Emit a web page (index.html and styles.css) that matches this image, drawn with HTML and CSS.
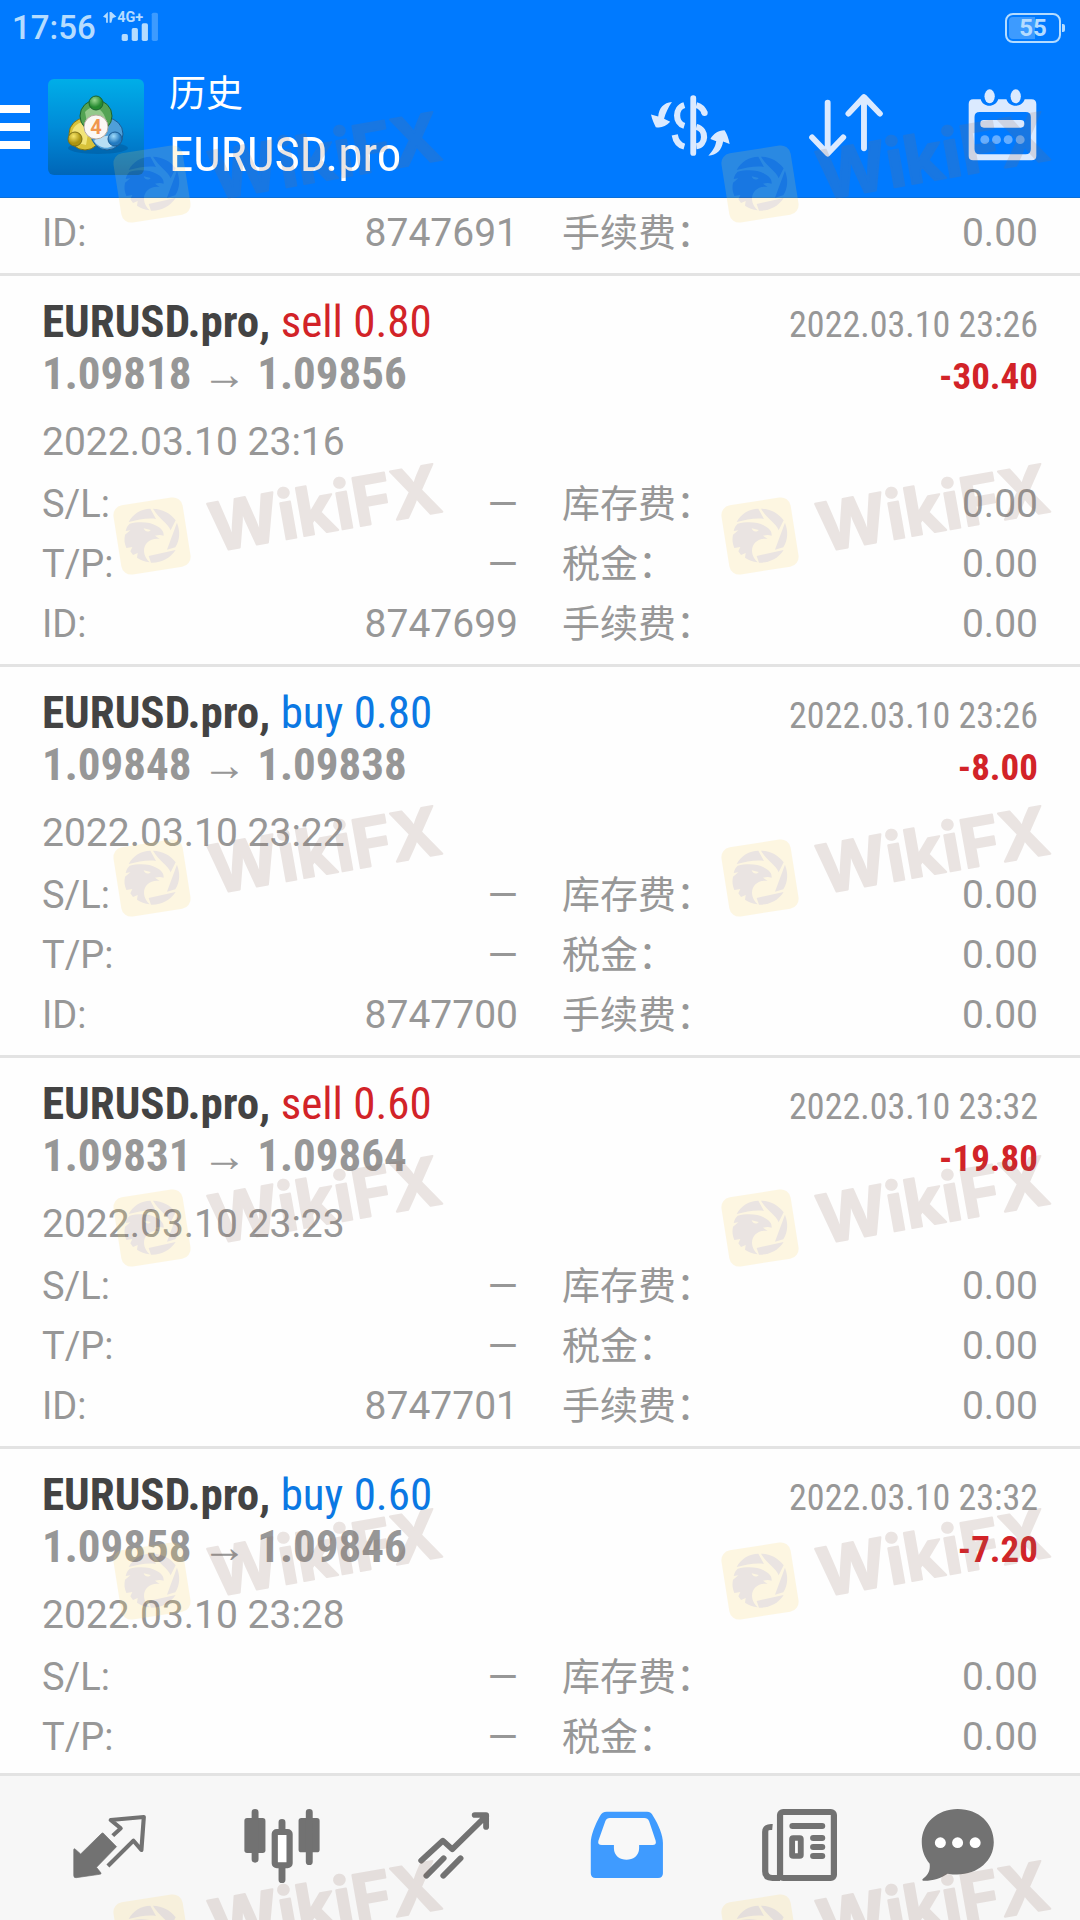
FILE: index.html
```html
<!DOCTYPE html>
<html lang="zh-CN">
<head>
<meta charset="utf-8">
<meta name="viewport" content="width=device-width, initial-scale=1">
<title>历史 EURUSD.pro</title>
<link rel="stylesheet" href="styles.css">
</head>
<body>
<div class="app">
  <header class="header">
    <div class="status">
      <span class="clock">17:56</span>
      <svg class="signal" viewBox="300 30 162 96" preserveAspectRatio="none" aria-hidden="true">
        <g fill="#b5dcff">
          <path d="M300 50l14-14v32h-5V54z"/><path d="M319 36h5l15 14-11 4-4 14h-5z"/>
          <rect x="354" y="102" width="18" height="21" rx="5"/>
          <rect x="383" y="84" width="18" height="39" rx="5"/>
          <rect x="412" y="70" width="18" height="53" rx="5"/>
          <text class="network" x="341" y="67">4G+</text>
        </g>
        <rect x="441" y="38" width="18" height="85" rx="5" fill="#3d9bff"/>
      </svg>
      <span class="battery"><span class="level">55</span></span>
    </div>
    <div class="appbar">
      <button class="menu" aria-label="菜单"><span></span><span></span><span></span></button>
      <svg class="logo" viewBox="0 0 96 96" aria-hidden="true">
        <defs>
          <linearGradient id="tile" x1="0" y1="0" x2="0" y2="1"><stop offset="0" stop-color="#00aee8"/><stop offset=".5" stop-color="#008bd8"/><stop offset="1" stop-color="#0066b8"/></linearGradient>
          <radialGradient id="green" cx=".4" cy=".3"><stop offset="0" stop-color="#9ad890"/><stop offset="1" stop-color="#258a30"/></radialGradient>
          <radialGradient id="gold" cx=".4" cy=".3"><stop offset="0" stop-color="#f8e66a"/><stop offset="1" stop-color="#ac9410"/></radialGradient>
          <radialGradient id="sky" cx=".4" cy=".3"><stop offset="0" stop-color="#a0dbfa"/><stop offset="1" stop-color="#237ac0"/></radialGradient>
        </defs>
        <rect width="96" height="96" rx="6" fill="url(#tile)"/>
        <ellipse cx="50" cy="69" rx="30" ry="6" fill="#00508f" opacity=".4"/>
        <g stroke-width="1">
          <circle cx="37" cy="55" r="16" fill="#d8c23a" stroke="#7e7014"/><path d="M24 53c2-8 10-12 18-9l-4 22-8-2z" fill="#f2e478"/>
          <circle cx="59" cy="55" r="16" fill="#4f9fd8" stroke="#1b5c94"/><path d="M46 62c6 9 18 9 24 0l-4-6-16 2z" fill="#b8def4"/>
          <circle cx="48" cy="37" r="16" fill="#54a353" stroke="#1c642e"/><path d="M37 33c8-10 20-4 22 13l-10 2-10-4z" fill="#94c98b"/>
          <circle cx="48" cy="24" r="7" fill="url(#green)" stroke="#1c642e"/>
          <circle cx="27" cy="60" r="7" fill="url(#gold)" stroke="#7e7014"/>
          <circle cx="67" cy="60" r="7" fill="url(#sky)" stroke="#1b5c94"/>
          <circle cx="48" cy="48" r="12" fill="#fbf8f5" stroke="#b6aaa0"/>
        </g>
        <text class="four" x="48" y="55" text-anchor="middle">4</text>
      </svg>
      <h1 class="title"><span class="section">历史</span><span class="symbol">EURUSD.pro</span></h1>
      <div class="actions">
        <button aria-label="货币">
          <svg class="ico-money" viewBox="321 281 230 182" preserveAspectRatio="none">
            <path d="M382 302c-24 2-38 18-40 43l-21-6c3 16 10 29 14 38 14 3 29-1 42-16l-18-9c5-18 12-34 23-50zM488 462c14-16 20-26 23-43l-17-7c9-16 21-25 41-26 6 9 12 24 15 41l-19-7c-4 26-19 41-43 42z" fill="#dbeaff"/>
            <path d="M418 311c-28 8-28 54 0 62M453 311q18 5 24 24M390 400q5 29 28 35M453 376c32 8 28 55 0 58" fill="none" stroke="#dbeaff" stroke-width="18"/>
            <path d="M444 290v164" stroke="#dbeaff" stroke-width="17" stroke-linecap="round"/>
            <circle cx="477" cy="335" r="9" fill="#dbeaff"/>
          </svg>
        </button>
        <button aria-label="排序">
          <svg class="ico-sort" viewBox="782 279 214 192" preserveAspectRatio="none">
            <path d="M836 308v152M791 412l45 49 45-49M941 445V292M896 341l45-50 46 50" fill="none" stroke="#dbeaff" stroke-width="17" stroke-linecap="round" stroke-linejoin="round"/>
          </svg>
        </button>
        <button aria-label="日期">
          <svg class="ico-cal" viewBox="1241 267 201 216" preserveAspectRatio="none">
            <path fill-rule="evenodd" fill="#dbeaff" d="M1256 298h22c6 26 44 26 51 0h24c7 26 46 26 53 0h20q14 0 14 14v156q0 13-14 13h-170q-13 0-13-13V312q0-14 13-14zM1275 336q-15 0-15 15v96q0 16 15 16h134q15 0 15-16v-96q0-15-15-15z"/>
            <ellipse cx="1304" cy="289" rx="15" ry="21" fill="#dbeaff"/><ellipse cx="1380" cy="289" rx="15" ry="21" fill="#dbeaff"/>
            <rect x="1277" y="360" width="128" height="23" rx="10" fill="#dbeaff"/>
            <g fill="#66aeff"><circle cx="1290" cy="419" r="13"/><circle cx="1324" cy="419" r="13"/><circle cx="1358" cy="419" r="13"/><circle cx="1393" cy="419" r="13"/></g>
          </svg>
        </button>
      </div>
    </div>
  </header>

  <main class="list">
    <article class="deal deal-partial">
      <dl class="facts">
        <div><dt>ID:</dt><dd>8747691</dd></div><div><dt>手续费：</dt><dd>0.00</dd></div>
      </dl>
    </article>

    <article class="deal">
      <div class="line"><h2 class="name">EURUSD.pro, <span class="sell">sell 0.80</span></h2><time class="closed">2022.03.10 23:26</time></div>
      <div class="line line-price"><p class="prices">1.09818 <span class="arrow">→</span> 1.09856</p><p class="profit">-30.40</p></div>
      <time class="opened">2022.03.10 23:16</time>
      <dl class="facts">
        <div><dt>S/L:</dt><dd>—</dd></div><div><dt>库存费：</dt><dd>0.00</dd></div>
        <div><dt>T/P:</dt><dd>—</dd></div><div><dt>税金：</dt><dd>0.00</dd></div>
        <div><dt>ID:</dt><dd>8747699</dd></div><div><dt>手续费：</dt><dd>0.00</dd></div>
      </dl>
    </article>

    <article class="deal">
      <div class="line"><h2 class="name">EURUSD.pro, <span class="buy">buy 0.80</span></h2><time class="closed">2022.03.10 23:26</time></div>
      <div class="line line-price"><p class="prices">1.09848 <span class="arrow">→</span> 1.09838</p><p class="profit">-8.00</p></div>
      <time class="opened">2022.03.10 23:22</time>
      <dl class="facts">
        <div><dt>S/L:</dt><dd>—</dd></div><div><dt>库存费：</dt><dd>0.00</dd></div>
        <div><dt>T/P:</dt><dd>—</dd></div><div><dt>税金：</dt><dd>0.00</dd></div>
        <div><dt>ID:</dt><dd>8747700</dd></div><div><dt>手续费：</dt><dd>0.00</dd></div>
      </dl>
    </article>

    <article class="deal">
      <div class="line"><h2 class="name">EURUSD.pro, <span class="sell">sell 0.60</span></h2><time class="closed">2022.03.10 23:32</time></div>
      <div class="line line-price"><p class="prices">1.09831 <span class="arrow">→</span> 1.09864</p><p class="profit">-19.80</p></div>
      <time class="opened">2022.03.10 23:23</time>
      <dl class="facts">
        <div><dt>S/L:</dt><dd>—</dd></div><div><dt>库存费：</dt><dd>0.00</dd></div>
        <div><dt>T/P:</dt><dd>—</dd></div><div><dt>税金：</dt><dd>0.00</dd></div>
        <div><dt>ID:</dt><dd>8747701</dd></div><div><dt>手续费：</dt><dd>0.00</dd></div>
      </dl>
    </article>

    <article class="deal">
      <div class="line"><h2 class="name">EURUSD.pro, <span class="buy">buy 0.60</span></h2><time class="closed">2022.03.10 23:32</time></div>
      <div class="line line-price"><p class="prices">1.09858 <span class="arrow">→</span> 1.09846</p><p class="profit">-7.20</p></div>
      <time class="opened">2022.03.10 23:28</time>
      <dl class="facts">
        <div><dt>S/L:</dt><dd>—</dd></div><div><dt>库存费：</dt><dd>0.00</dd></div>
        <div><dt>T/P:</dt><dd>—</dd></div><div><dt>税金：</dt><dd>0.00</dd></div>
      </dl>
    </article>
  </main>

  <nav class="tabs">
    <a href="#quotes" aria-label="行情">
      <svg viewBox="207 141 226 234" preserveAspectRatio="none">
        <path d="M300 219l39 41-58 62 13 17q1 4-4 4l-68 10q-7 1-7-6v-78q0-6 6 0l14 13 61-62q2-2 4-1z" fill="#727272" stroke="#727272" stroke-width="2" stroke-linejoin="round"/>
        <path d="M328 227l23-22-29-25 96-9-7 99-23-28-74 76" fill="none" stroke="#727272" stroke-width="12" stroke-linejoin="round"/>
      </svg>
    </a>
    <a href="#chart" aria-label="图表">
      <svg viewBox="704 141 226 234" preserveAspectRatio="none">
        <g fill="#727272"><rect x="708" y="174" width="61" height="105" rx="8"/><rect x="865" y="174" width="61" height="103" rx="8"/></g>
        <path d="M739 157v141M896 157v148M817 187v22M817 322v37" stroke="#727272" stroke-width="20" stroke-linecap="round"/>
        <rect x="796" y="216" width="43" height="100" rx="6" fill="#fff" stroke="#727272" stroke-width="18"/>
      </svg>
    </a>
    <a href="#trade" aria-label="交易">
      <svg viewBox="1204 141 226 234" preserveAspectRatio="none">
        <path d="M1222 302l63-60 27 26 98-100M1377 165h33v36M1237 347l50-52M1286 347l50-52" fill="none" stroke="#727272" stroke-width="17" stroke-linecap="round" stroke-linejoin="round"/>
      </svg>
    </a>
    <a href="#history" aria-label="历史" aria-current="page">
      <svg viewBox="137 141 226 234" preserveAspectRatio="none">
        <path d="M194 155h117q12 0 17 12c17 28 29 58 29 82v91q0 14-14 14H162q-14 0-14-14v-91c0-24 12-54 27-82q6-12 19-12z" fill="#3f9bff"/>
        <path d="M203 174h100q10 0 14 10l19 58q3 13-9 13h-39v10c0 46-73 46-73 0v-10h-35q-13 0-10-13l20-58q4-10 13-10z" fill="#f8f8f8"/>
      </svg>
    </a>
    <a href="#news" aria-label="新闻">
      <svg viewBox="639 141 226 234" preserveAspectRatio="none">
        <rect x="700" y="156" width="156" height="198" rx="9" fill="none" stroke="#727272" stroke-width="18"/>
        <path d="M678 201q-21-2-21 15v118q0 20 21 20h22" fill="none" stroke="#727272" stroke-width="18"/>
        <rect x="735" y="234" width="25" height="54" rx="3" fill="#fff" stroke="#727272" stroke-width="17"/>
        <path d="M736 198h86M796 234h26M796 261h26M796 288h26" stroke="#727272" stroke-width="18" stroke-linecap="round"/>
      </svg>
    </a>
    <a href="#chat" aria-label="聊天">
      <svg class="chat" viewBox="1101 141 296 234" preserveAspectRatio="none">
        <path d="M1213 147c62 0 105 43 105 100 0 62-60 109-134 94-20 14-45 22-71 21q-6-2 2-8c13-11 19-23 17-43-16-20-23-42-23-65 0-56 45-99 104-99z" fill="#727272"/>
        <g fill="#fff"><circle cx="1163" cy="248" r="16"/><circle cx="1213" cy="248" r="16"/><circle cx="1264" cy="248" r="16"/></g>
      </svg>
    </a>
  </nav>

  <svg class="defs" aria-hidden="true">
    <symbol id="mark" viewBox="0 0 360 140">
      <rect x="-35" y="-35" width="70" height="70" rx="10" fill="#fad25a" transform="translate(60 84) rotate(-9)"/>
      <g fill="#8c695c" transform="translate(60 84) scale(.333) translate(-157 -229)">
        <path d="M87 187C100 162 125 147 152 147L169 178C145 174 115 180 87 187z"/>
        <path d="M160 147C188 148 212 160 228 182L213 212C205 190 180 180 160 147z"/>
        <path d="M232 189C242 215 241 240 227 263L202 270z"/>
        <path d="M228 271C212 296 185 310 154 309L147 289z"/>
        <path fill-rule="evenodd" d="M90 192C118 185 150 186 170 198C186 206 193 216 192 228C184 225 176 225 166 228L180 238C155 233 132 250 133 274C134 290 142 300 150 308C135 305 124 302 112 294L114 280L100 286L92 275L98 262L80 265C74 250 73 240 76 225L92 212L78 214C80 204 84 197 90 192zM132 206C136 218 148 218 153 211z"/>
      </g>
      <text class="brand" transform="translate(122 100) rotate(-10)" x="0" y="0">WikiFX</text>
    </symbol>
  </svg>
  <div class="marks" aria-hidden="true">
    <svg><use href="#mark"/></svg><svg><use href="#mark"/></svg>
    <svg><use href="#mark"/></svg><svg><use href="#mark"/></svg>
    <svg><use href="#mark"/></svg><svg><use href="#mark"/></svg>
    <svg><use href="#mark"/></svg><svg><use href="#mark"/></svg>
    <svg><use href="#mark"/></svg><svg><use href="#mark"/></svg>
    <svg><use href="#mark"/></svg><svg><use href="#mark"/></svg>
  </div>
</div>
</body>
</html>
```
FILE: styles.css
```css
:root {
  --sans: Roboto, "Noto Sans CJK SC", sans-serif;
  --narrow: "Roboto Condensed", "Liberation Sans Narrow", Roboto, sans-serif;
  --blue: #007aff;
  --grey: #979797;
}

* { box-sizing: border-box; margin: 0; }

body { font-family: var(--sans); color: var(--grey); background: #fefefe; }

.app {
  position: relative;
  display: flex;
  flex-direction: column;
  height: 100vh;
  overflow: hidden;
}

button { border: 0; padding: 0; background: none; display: flex; align-items: center; justify-content: center; }

/* Header */
.header { background: var(--blue); color: #fff; border-bottom: 1px solid #0b6fd8; }

.status { display: flex; align-items: center; height: 56px; padding: 0 15px 0 12px; color: #b5dcff; }
.clock { font-size: 33px; font-weight: 500; line-height: 56px; }
.signal { width: 56px; height: 32px; margin-left: 7px; align-self: flex-start; margin-top: 10px; overflow: visible; }
.network { font: 700 42px var(--sans); }

.battery {
  position: relative;
  margin-left: auto;
  margin-right: 4px;
  width: 56px;
  height: 30px;
  padding: 2px;
  border: 2px solid #b5dcff;
  border-radius: 8px;
}
.battery::after {
  content: "";
  position: absolute;
  right: -6px;
  top: 9px;
  width: 3px;
  height: 8px;
  border-radius: 0 2px 2px 0;
  background: #b5dcff;
}
.level {
  display: block;
  height: 22px;
  border-radius: 4px;
  background: linear-gradient(90deg, #3d9bff 55%, transparent 55%);
  font-size: 24px;
  font-weight: 700;
  line-height: 22px;
  text-align: center;
}

.appbar { display: flex; align-items: center; height: 141px; }
.menu { flex-direction: column; gap: 10px; width: 30px; }
.menu span { width: 100%; height: 8px; background: #fff; }
.logo { width: 96px; height: 96px; margin-left: 18px; }
.four { font: 700 20px var(--sans); fill: #f0964f; }
.title { margin-left: 25px; padding-bottom: 4px; font-weight: 400; }
.section { display: block; font-size: 37px; line-height: 60px; }
.symbol { display: block; font-family: var(--narrow); font-size: 49px; line-height: 60px; }
.actions { display: flex; margin-left: auto; padding-bottom: 3px; }
.actions button { width: 156px; height: 96px; }
.ico-money { width: 79px; height: 61px; }
.ico-sort { width: 74px; height: 64px; }
.ico-cal { width: 69px; height: 72px; }

/* Deals */
.list { flex: 1; min-height: 0; overflow: hidden; }
.deal { padding: 21px 42px 10px; border-bottom: 3px solid #e3e3e3; }
.deal-partial { padding-top: 5px; }
.line { display: flex; justify-content: space-between; align-items: baseline; font-family: var(--narrow); line-height: 50px; height: 50px; }
.line-price { line-height: 54px; height: 54px; }
.name { font-size: 45px; font-weight: 700; color: #434343; }
.name span { font-weight: 400; }
.sell { color: #d22328; }
.buy { color: #0b78e3; }
.closed { font-size: 36px; }
.prices { font-size: 45px; font-weight: 700; }
.arrow { font-family: "Liberation Sans", sans-serif; font-weight: 400; }
.profit { font-size: 37px; font-weight: 700; color: #d22328; }
.opened { display: block; margin: 11px 0 2px; font-size: 39px; line-height: 60px; }

.facts { display: grid; grid-template-columns: 1fr 1fr; column-gap: 44px; font-size: 39px; line-height: 60px; }
.facts div { display: flex; justify-content: space-between; height: 60px; }
.facts dt { font-size: 38px; }

/* Bottom tabs */
.tabs {
  display: grid;
  grid-template-columns: repeat(6, 1fr);
  height: 147px;
  padding: 0 24px 4px;
  border-top: 3px solid #e3e3e3;
  background: #f7f7f7;
}
.tabs a { display: flex; align-items: center; justify-content: center; }
.tabs svg { width: 78px; height: 78px; }
.tabs .chat { width: 102px; }

/* Watermark layer */
.defs { position: absolute; width: 0; height: 0; }
.marks {
  position: absolute;
  inset: 0;
  display: grid;
  grid-template-columns: 608px 608px;
  grid-template-rows: 352px 342px 350px 353px 352px 140px;
  padding: 100px 0 0 92px;
  overflow: hidden;
  opacity: .17;
  pointer-events: none;
}
.marks svg { width: 360px; height: 140px; }
.brand { font: 700 67px Inter, sans-serif; fill: #8c695c; stroke: #8c695c; stroke-width: 2px; stroke-linejoin: round; }
```
